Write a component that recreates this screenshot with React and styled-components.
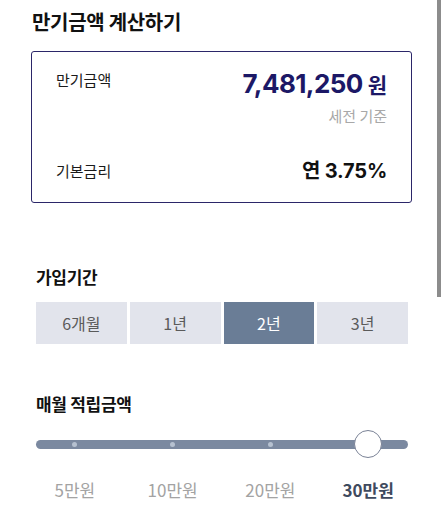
import React from "react";
import styled, { createGlobalStyle } from "styled-components";

const Global = createGlobalStyle`
  html, body { margin: 0; padding: 0; background: #ffffff; }
  body {
    font-family: "Noto Sans CJK KR", "Noto Sans", sans-serif;
    color: #111111;
    overflow: hidden;
  }
`;

const Page = styled.div`
  width: 444px;
  height: 517px;
  box-sizing: border-box;
  padding: 8px 32px 0 31px;
`;

const Title = styled.h1`
  margin: 0 0 0 1px;
  font-size: 20px;
  line-height: 28px;
  font-weight: 700;
  letter-spacing: -0.3px;
`;

const Card = styled.div`
  margin-top: 15px;
  height: 152px;
  box-sizing: border-box;
  border: 1.5px solid #2b2669;
  border-radius: 3px;
  padding: 16px 24px 18px 24px;
  display: flex;
  flex-direction: column;
  justify-content: space-between;
`;

const Row = styled.div`
  display: flex;
  justify-content: space-between;
  align-items: ${(p) => (p.$top ? "flex-start" : "center")};
`;

const Label = styled.div`
  font-size: 15px;
  line-height: 22px;
  color: #1a1a1a;
  margin-top: ${(p) => p.$offset || 0}px;
`;

const ValueCol = styled.div`
  display: flex;
  flex-direction: column;
  align-items: flex-end;
`;

const Amount = styled.div`
  display: flex;
  align-items: baseline;
  gap: 5px;
  color: #1c1866;
  font-weight: 700;
`;

const Number = styled.span`
  font-family: "Inter", "Noto Sans CJK KR", sans-serif;
  font-size: 26px;
  line-height: 32px;
  letter-spacing: -0.6px;
`;

const Unit = styled.span`
  font-size: 21px;
`;

const Note = styled.div`
  margin-top: 6px;
  font-size: 15px;
  line-height: 20px;
  color: #a8a8a8;
`;

const Rate = styled.div`
  font-family: "Inter", "Noto Sans CJK KR", sans-serif;
  font-size: 20px;
  line-height: 26px;
  font-weight: 700;
  letter-spacing: -0.2px;
  color: #111111;
`;

const Section = styled.section`
  padding: 0 4px 0 5px;
  margin-top: ${(p) => p.$gap}px;
`;

const SectionTitle = styled.h2`
  margin: 0;
  font-size: 17px;
  line-height: 24px;
  font-weight: 700;
  letter-spacing: -0.3px;
`;

const Segments = styled.div`
  margin-top: 13px;
  display: grid;
  grid-template-columns: repeat(4, 1fr);
  gap: 3px;
`;

const Segment = styled.div`
  height: 42px;
  display: flex;
  align-items: center;
  justify-content: center;
  font-size: 16px;
  background: ${(p) => (p.$active ? "#6a7d96" : "#e2e4ec")};
  color: ${(p) => (p.$active ? "#ffffff" : "#5a5a5a")};
`;

const Slider = styled.div`
  position: relative;
  margin: 14px -9px 0 -10px;
  display: grid;
  grid-template-columns: repeat(4, 1fr);
  height: 28px;
  align-items: center;
  justify-items: center;
`;

const Track = styled.div`
  position: absolute;
  left: 10px;
  right: 9px;
  top: 10px;
  height: 9px;
  border-radius: 5px;
  background: #7b89a0;
`;

const Dot = styled.div`
  position: relative;
  width: 5px;
  height: 5px;
  border-radius: 50%;
  background: #b6c1d0;
`;

const Thumb = styled.div`
  position: relative;
  width: 26px;
  height: 26px;
  border-radius: 50%;
  background: #ffffff;
  border: 1px solid #7a8296;
`;

const Marks = styled.div`
  margin: 20px -9px 0 -10px;
  display: grid;
  grid-template-columns: repeat(4, 1fr);
  justify-items: center;
`;

const Mark = styled.div`
  font-size: 17px;
  line-height: 24px;
  color: ${(p) => (p.$active ? "#3f4a5e" : "#a3a3a3")};
  font-weight: ${(p) => (p.$active ? 700 : 400)};
`;

const Scrollbar = styled.div`
  position: fixed;
  top: 0;
  left: 437px;
  width: 4px;
  height: 297px;
  background: #8c8c8c;
`;

const periods = ["6개월", "1년", "2년", "3년"];
const amounts = ["5만원", "10만원", "20만원", "30만원"];

export default function App() {
  const activePeriod = 2;
  const activeAmount = 3;
  return (
    <>
      <Global />
      <Page>
        <Title>만기금액 계산하기</Title>
        <Card>
          <Row $top>
            <Label $offset={1}>만기금액</Label>
            <ValueCol>
              <Amount>
                <Number>7,481,250</Number>
                <Unit>원</Unit>
              </Amount>
              <Note>세전 기준</Note>
            </ValueCol>
          </Row>
          <Row>
            <Label>기본금리</Label>
            <Rate>연 3.75%</Rate>
          </Row>
        </Card>
        <Section $gap={62}>
          <SectionTitle>가입기간</SectionTitle>
          <Segments>
            {periods.map((p, i) => (
              <Segment key={p} $active={i === activePeriod}>
                {p}
              </Segment>
            ))}
          </Segments>
        </Section>
        <Section $gap={48}>
          <SectionTitle>매월 적립금액</SectionTitle>
          <Slider>
            <Track />
            {amounts.map((a, i) =>
              i === activeAmount ? <Thumb key={a} /> : <Dot key={a} />
            )}
          </Slider>
          <Marks>
            {amounts.map((a, i) => (
              <Mark key={a} $active={i === activeAmount}>
                {a}
              </Mark>
            ))}
          </Marks>
        </Section>
      </Page>
      <Scrollbar />
    </>
  );
}
